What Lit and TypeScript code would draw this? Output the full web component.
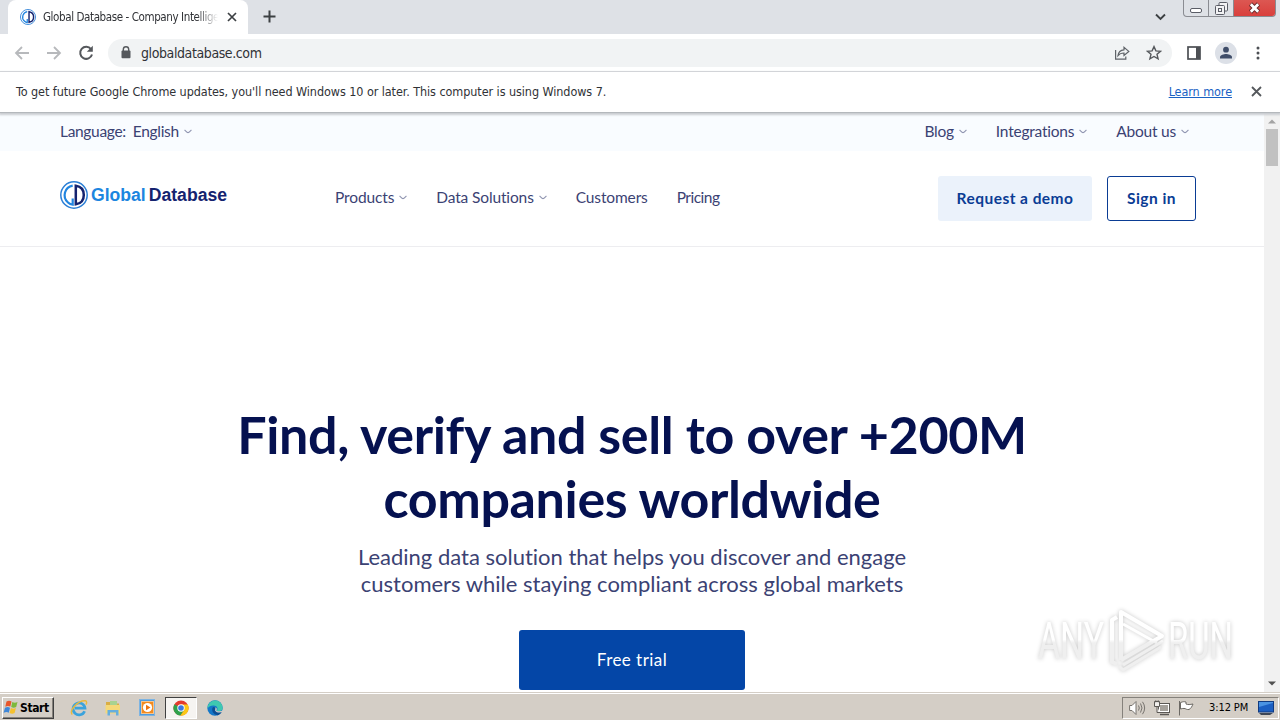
import { LitElement, css, html, svg } from "lit";
import { customElement, property } from "lit/decorators.js";

const caret = html`
  <svg class="caret" width="8" height="5" viewBox="0 0 8 5">
    <path d="M.6.8C2 2.2 3 3.6 4 3.6S6 2.2 7.4.8" fill="none" stroke="#8f94b0" stroke-width="1.1" />
  </svg>`;

// the G and D letters inside the ring
const emblem = svg`
  <circle cx="14" cy="14" r="13.2" fill="none" stroke="#2b7fd6" stroke-width="1.5" />
  <path d="M12.7 4.6A9.7 9.7 0 0 0 8 21.5Q10 23.5 12.7 23.7V17.5" fill="none" stroke="#2185e0" stroke-width="2.2" />
  <path d="M15.8 4.7V23.3C21.5 22.5 23.8 18.5 23.8 14S21.5 5.5 15.8 4.7Z" fill="none" stroke="#14236f" stroke-width="2.5" />
`;

@customElement("browser-chrome")
export class BrowserChrome extends LitElement {
  @property({ type: String })
  url = "";

  static get styles() {
    return css`
      :host {
        display: block;
        font-family: "DejaVu Sans Condensed", "DejaVu Sans", sans-serif;
        color: #303236;
        position: relative;
        z-index: 2;
      }
      svg {
        display: block;
        flex: none;
      }
      .tabs {
        display: flex;
        height: 34px;
        background: #dee1e6;
      }
      .tab {
        box-sizing: border-box;
        display: flex;
        align-items: center;
        width: 240px;
        margin-left: 8px;
        padding: 0 11px 0 12px;
        background: #fff;
        border-radius: 8px 8px 0 0;
      }
      .title {
        width: 175px;
        margin: 0 9px 0 7px;
        white-space: nowrap;
        font-size: 11.5px;
        letter-spacing: -0.4px;
        -webkit-mask-image: linear-gradient(90deg, #000 88%, transparent);
      }
      .plus {
        margin: 10px 0 0 15px;
      }
      .spacer {
        flex: 1;
      }
      .down {
        margin: 13px 17px 0 0;
      }
      .window {
        display: flex;
        height: 17px;
        margin-right: 4px;
        box-sizing: border-box;
        border: 1px solid #8a8c92;
        border-top: 0;
        border-radius: 0 0 4px 4px;
        overflow: hidden;
      }
      .window span {
        display: flex;
        justify-content: center;
        align-items: center;
        width: 24px;
        border-right: 1px solid #8a8c92;
      }
      .window .minimize {
        padding-top: 4px;
      }
      .window .close {
        width: 41px;
        border: 0;
        background: linear-gradient(#dc5752, #d93f3c);
      }
      .toolbar {
        box-sizing: border-box;
        display: flex;
        align-items: center;
        height: 38px;
        padding: 0 20px 0 14px;
        background: #fff;
        border-bottom: 1px solid #d6d8dc;
      }
      .back {
        margin-right: 16px;
      }
      .forward {
        margin-right: 16px;
      }
      .omnibox {
        box-sizing: border-box;
        display: flex;
        align-items: center;
        flex: 1;
        height: 28px;
        margin: 0 15px 0 14px;
        padding: 0 10px 0 13px;
        border-radius: 14px;
        background: #f1f3f4;
      }
      .url {
        flex: 1;
        margin-left: 10px;
        font-size: 14px;
        letter-spacing: -0.4px;
      }
      .share {
        margin-right: 16px;
      }
      .avatar {
        margin: 0 19px 0 14px;
      }
      .infobar {
        box-sizing: border-box;
        display: flex;
        align-items: center;
        height: 41px;
        padding: 0 18px 2px 16px;
        font-size: 12.5px;
        letter-spacing: -0.07px;
        background: #fff;
        border-bottom: 1px solid #b4b8bc;
        box-shadow: 0 1px 2px 1px #c9ccd0;
      }
      .message {
        flex: 1;
      }
      .learn {
        margin-right: 19px;
        color: #1a62c4;
        text-decoration: underline;
      }
    `;
  }

  render() {
    return html`
      <div class="tabs">
        <div class="tab">
          <svg width="16" height="16" viewBox="0 0 28 28">${emblem}</svg>
          <span class="title">Global Database - Company Intellige</span>
          <svg width="10" height="10" viewBox="0 0 10 10">
            <path d="M1 1l8 8M9 1L1 9" stroke="#3c4043" stroke-width="1.7" />
          </svg>
        </div>
        <svg class="plus" width="13" height="13" viewBox="0 0 13 13">
          <path d="M6.5 .5v12M.5 6.5h12" stroke="#3c4043" stroke-width="2" />
        </svg>
        <span class="spacer"></span>
        <svg class="down" width="11" height="8" viewBox="0 0 11 8">
          <path d="M1 1.5l4.5 4.5L10 1.5" fill="none" stroke="#3c4043" stroke-width="1.9" />
        </svg>
        <div class="window">
          <span class="minimize">
            <svg width="13" height="5" viewBox="0 0 13 5">
              <rect x=".5" y=".5" width="11" height="4" rx="1.5" fill="#fff" stroke="#5a5d66" />
            </svg>
          </span>
          <span>
            <svg width="13" height="13" viewBox="0 0 13 13" fill="#f2f2f4" stroke="#5a5d66">
              <rect x="4" y=".5" width="8.5" height="8.5" rx="1" />
              <rect x=".5" y="3.5" width="9" height="9" rx="1" />
              <rect x="3.5" y="6.5" width="3" height="3" />
            </svg>
          </span>
          <span class="close">
            <svg width="13" height="12" viewBox="0 0 13 12">
              <path d="M2.5 2l8 8M10.5 2l-8 8" stroke="#6b2a2c" stroke-width="4.6" />
              <path d="M2.8 2.2l7.4 7.6M10.2 2.200L2.800 9.800" stroke="#fff" stroke-width="2.8" />
            </svg>
          </span>
        </div>
      </div>

      <div class="toolbar">
        <svg class="back" width="16" height="14" viewBox="0 0 16 14" fill="none" stroke="#b7b9bc" stroke-width="1.8">
          <path d="M15 7H2M8 1L2 7l6 6" />
        </svg>
        <svg class="forward" width="16" height="14" viewBox="0 0 16 14" fill="none" stroke="#b7b9bc" stroke-width="1.8">
          <path d="M1 7h13M8 1l6 6-6 6" />
        </svg>
        <svg width="16" height="16" viewBox="0 0 16 16">
          <path d="M13 4.2A6 6 0 1 0 14 9.5" fill="none" stroke="#55585c" stroke-width="2" />
          <path d="M14.8 .8v6H8.8z" fill="#55585c" />
        </svg>
        <div class="omnibox">
          <svg width="10" height="13" viewBox="0 0 10 13">
            <path d="M2.3 5V3.5a2.7 2.7 0 0 1 5.4 0V5" fill="none" stroke="#55585c" stroke-width="1.4" />
            <rect x=".5" y="4.6" width="9" height="7.6" rx="1" fill="#55585c" />
          </svg>
          <span class="url">${this.url}</span>
          <svg class="share" width="16" height="16" viewBox="0 0 16 16" fill="none" stroke="#5f6368" stroke-width="1.2">
            <path d="M1.6 5v9.2h10.2v-2.6" />
            <path d="M4 10.6c.4-3.6 2.6-5.6 6-5.8V2.2l4.8 4.2L10 10.4V8c-2.6 0-4.5.7-6 2.6z" />
          </svg>
          <svg width="16" height="16" viewBox="0 0 16 16">
            <path d="M8 1.6l1.9 4.3 4.6.4-3.5 3 1.1 4.6L8 11.5l-4.1 2.4L5 9.3l-3.5-3 4.6-.4z" fill="none" stroke="#55585c" stroke-width="1.4" />
          </svg>
        </div>
        <svg width="14" height="14" viewBox="0 0 14 14">
          <rect x="1" y="1" width="12" height="12" fill="none" stroke="#4c4f54" stroke-width="1.7" />
          <path d="M9 1h4v12H9z" fill="#4c4f54" />
        </svg>
        <svg class="avatar" width="22" height="22" viewBox="0 0 22 22">
          <circle cx="11" cy="11" r="11" fill="#dce0e7" />
          <circle cx="11" cy="7.7" r="2.9" fill="#3f4d69" />
          <path d="M5 16.5v-1.3c0-2.4 4-3.2 6-3.2s6 .8 6 3.2v1.3z" fill="#3f4d69" />
        </svg>
        <svg width="4" height="14" viewBox="0 0 4 14" fill="#4c4f54">
          <circle cx="2" cy="2" r="1.5" />
          <circle cx="2" cy="7" r="1.5" />
          <circle cx="2" cy="12" r="1.5" />
        </svg>
      </div>

      <div class="infobar">
        <span class="message">To get future Google Chrome updates, you'll need Windows 10 or later. This computer is using Windows 7.</span>
        <span class="learn">Learn more</span>
        <svg width="11" height="11" viewBox="0 0 11 11">
          <path d="M1 1l9 9M10 1l-9 9" stroke="#55585c" stroke-width="1.8" />
        </svg>
      </div>
    `;
  }
}

@customElement("site-page")
export class SitePage extends LitElement {
  static get styles() {
    return css`
      :host {
        display: block;
        flex: 1;
        min-width: 0;
        background: #fff;
        color: #3b4273;
        font-family: Lato, sans-serif;
        font-size: 15.5px;
        font-variant-ligatures: none;
      }
      svg {
        display: block;
        flex: none;
      }
      .top {
        box-sizing: border-box;
        display: flex;
        align-items: center;
        justify-content: space-between;
        height: 38px;
        padding: 0 75px 2px 60px;
        background: #f9fcff;
      }
      .menu {
        display: flex;
        gap: 29px;
        white-space: nowrap;
      }
      .item {
        display: flex;
        align-items: center;
        letter-spacing: -0.22px;
      }
      .language {
        letter-spacing: -0.32px;
      }
      .caret {
        margin-left: 5px;
      }
      .label {
        margin-right: 7px;
      }
      header {
        box-sizing: border-box;
        display: flex;
        align-items: center;
        height: 96px;
        padding: 0 68px 0 60px;
        border-bottom: 1px solid #ededf0;
      }
      .logo {
        display: flex;
        align-items: center;
        width: 275px;
        padding-bottom: 7px;
        font: bold 17.6px "Liberation Sans", sans-serif;
        color: #14236f;
      }
      .logo span {
        margin-left: 3px;
      }
      .logo .blue {
        color: #1c86e0;
      }
      .nav {
        flex: 1;
        padding-bottom: 3px;
      }
      .nav .item {
        letter-spacing: -0.13px;
      }
      .nav .item:last-child {
        letter-spacing: -0.5px;
      }
      .button {
        box-sizing: border-box;
        display: flex;
        align-items: center;
        justify-content: center;
        height: 45px;
        padding-bottom: 2px;
        border-radius: 3px;
        font-weight: bold;
        color: #0a3c94;
        letter-spacing: 0.45px;
      }
      .demo {
        width: 154px;
        margin-right: 15px;
        background: #ebf2fb;
      }
      .signin {
        width: 89px;
        border: 1px solid #0a3c94;
      }
      .hero {
        display: flex;
        flex-direction: column;
        align-items: center;
        padding-top: 155px;
        text-align: center;
      }
      h1 {
        margin: 0 0 13px;
        font-size: 52px;
        line-height: 64px;
        font-weight: bold;
        color: #051150;
        letter-spacing: -0.36px;
        white-space: nowrap;
      }
      p {
        margin: 0;
        font-size: 22px;
        line-height: 27px;
        white-space: nowrap;
      }
      .trial {
        width: 226px;
        height: 60px;
        margin-top: 33px;
        background: #0446a7;
        color: #fff;
        font-size: 17px;
        font-weight: normal;
      }
    `;
  }

  item(label: string, hasMenu = true) {
    return html`<div class="item"><span>${label}</span>${hasMenu ? caret : ""}</div>`;
  }

  render() {
    return html`
      <div class="top">
        <div class="item language"><span class="label">Language:</span><span>English</span>${caret}</div>
        <div class="menu">
          ${this.item("Blog")} ${this.item("Integrations")} ${this.item("About us")}
        </div>
      </div>
      <header>
        <div class="logo">
          <svg width="28" height="28" viewBox="0 0 28 28">${emblem}</svg>
          <span class="blue">Global</span><span>Database</span>
        </div>
        <div class="menu nav">
          ${this.item("Products")} ${this.item("Data Solutions")}
          ${this.item("Customers", false)} ${this.item("Pricing", false)}
        </div>
        <div class="button demo">Request a demo</div>
        <div class="button signin">Sign in</div>
      </header>
      <div class="hero">
        <h1>
          Find, verify and sell to over +200M<br />
          companies worldwide
        </h1>
        <p>
          Leading data solution that helps you discover and engage<br />
          customers while staying compliant across global markets
        </p>
        <div class="button trial">Free trial</div>
      </div>
    `;
  }
}

@customElement("task-bar")
export class TaskBar extends LitElement {
  @property({ type: String })
  time = "";

  static get styles() {
    return css`
      :host {
        box-sizing: border-box;
        display: flex;
        align-items: center;
        height: 28px;
        padding: 2px 1px 0 2px;
        background: #d4cec6;
        border-top: 1px solid #d4cec6;
        box-shadow: inset 0 1px #fff;
        font-family: "DejaVu Sans Condensed", "DejaVu Sans", sans-serif;
        font-size: 11px;
        color: #000;
      }
      svg {
        display: block;
        flex: none;
      }
      .start {
        box-sizing: border-box;
        display: flex;
        align-items: center;
        width: 52px;
        height: 22px;
        border: 1px solid;
        border-color: #fff #404040 #404040 #fff;
        box-shadow: inset -1px -1px #85817b;
        font-weight: bold;
        font-size: 12px;
        letter-spacing: -0.4px;
      }
      .quick {
        display: flex;
        align-items: center;
        flex: 1;
        margin-left: 9px;
      }
      .app {
        box-sizing: border-box;
        display: flex;
        align-items: center;
        justify-content: center;
        width: 32px;
        height: 22px;
        margin-right: 2px;
      }
      .active {
        background: #f6f4f1;
        border: 1px solid;
        border-color: #404040 #fff #fff #404040;
      }
      .tray {
        box-sizing: border-box;
        display: flex;
        align-items: center;
        width: 157px;
        height: 22px;
        padding-left: 6px;
        border: 1px solid;
        border-color: #85817b #fff #fff #85817b;
      }
      .tray svg {
        margin-right: 8px;
      }
      .clock {
        width: 43px;
        margin: 0 10px 0 7px;
        white-space: nowrap;
        letter-spacing: -0.1px;
      }
    `;
  }

  render() {
    return html`
      <div class="start">
        <svg width="17" height="17" viewBox="0 0 17 17">
          <path d="M3.5 2.5c2-1.2 3.5-.9 5 0L7.3 7.6c-1.5-.8-3-.9-5 .1z" fill="#e8562a" />
          <path d="M9.3 3c1.7.9 3.3.9 5.2 0l-1.3 5c-1.9 1-3.4.8-5 0z" fill="#7db93c" />
          <path d="M2 8.7c2-1 3.5-.9 5 0l-1.2 5c-1.5-.9-3.1-.9-5.2.1z" fill="#3f87d8" />
          <path d="M7.9 9.1c1.6.8 3.2.9 5 0l-1.3 5c-1.8 1-3.4.8-5 0z" fill="#f5c12e" />
        </svg>
        <span>Start</span>
      </div>
      <div class="quick">
        <span class="app">
          <svg width="18" height="18" viewBox="0 0 18 18" fill="none">
            <path d="M14.6 12.2A6 6 0 1 1 15 9.2H5" stroke="#3ba3dc" stroke-width="2.7" />
            <path d="M2.3 15.5C-1 12 7 1.5 15.3 1.8c2 .5 1.4 2.5.6 3.8" stroke="#e9b93d" stroke-width="1.4" />
          </svg>
        </span>
        <span class="app">
          <svg width="18" height="18" viewBox="0 0 18 18">
            <path d="M2 3h5l1 1.5h7V14H2z" fill="#d9ae45" />
            <path d="M6 2h7v5H6z" fill="#a8d290" />
            <path d="M1.5 6h14.5v8.5h-14.5z" fill="#f5d878" />
            <path d="M3.5 16.5v-5.5h11v5.5h-2.5v-3H6v3z" fill="#64aede" />
          </svg>
        </span>
        <span class="app">
          <svg width="17" height="17" viewBox="0 0 17 17">
            <rect x=".5" y=".5" width="15" height="16" fill="#4f9bdc" stroke="#7db4e2" />
            <rect x="2.5" y="2.5" width="12" height="12" fill="#f28a1e" stroke="#f6c48c" />
            <circle cx="8.5" cy="8.5" r="4.6" fill="#fff" />
            <path d="M7 5.7l4.500 2.800L7 11.300z" fill="#ec7410" />
          </svg>
        </span>
        <span class="app active">
          <svg width="16" height="16" viewBox="0 0 16 16">
            <circle cx="8" cy="8" r="7.6" fill="#e33b2e" />
            <path d="M8 8L1.4 4.2A7.6 7.6 0 0 0 7.4 15.6L11.3 9.9z" fill="#2fa24c" />
            <path d="M8 4.5h6.8A7.6 7.6 0 0 1 7.4 15.6L11.3 9.9z" fill="#fbc816" />
            <circle cx="8" cy="8" r="3.7" fill="#fff" />
            <circle cx="8" cy="8" r="2.8" fill="#3b78e0" />
          </svg>
        </span>
        <span class="app">
          <svg width="16" height="16" viewBox="0 0 16 16">
            <circle cx="8" cy="8" r="7.7" fill="#1477c8" />
            <path d="M.8 6A7.6 7.6 0 0 1 15.7 8c0 3-3.5 3.7-6 2.7 1.6-1.6.7-4.7-2-5C4.5 5.2 2 6.3.4 8.5z" fill="#3fc8b0" />
            <path d="M6 7c-2.3 3.6.5 7.5 4.6 8.2 2-.7 3.5-2.2 4.3-3.8-3.4 1.5-6 .6-6.8-1.3 1.4-.8 1.3-3-2.1-3.1z" fill="#0c4e94" />
            <path d="M8.5 7.2c1.6 1 1.5 2.2.8 3.2 1.8 1.2 4.3 1.2 6.7-.2v1.6c-3 1.4-6.5.9-7.9-1.4z" fill="#d4cec6" />
          </svg>
        </span>
      </div>
      <div class="tray">
        <svg width="17" height="16" viewBox="0 0 17 16" stroke="#77736e" fill="none">
          <path d="M.6 5.5h2.4l4-4v13l-4-4H.6z" fill="#fff" />
          <path d="M9.5 5.5q1.6 2.5 0 5M11.5 3.5q3 4.5 0 9M13.5 1.8q4.3 6.2 0 12.4" />
        </svg>
        <svg width="16" height="16" viewBox="0 0 16 16" stroke="#5c5955">
          <rect x="4.5" y="3.5" width="11" height="9" fill="#fff" />
          <rect x="6.5" y="5.5" width="7" height="5" fill="#a5a19b" stroke="#a5a19b" />
          <path d="M6 14.5h9" stroke-width="1.5" />
          <path d="M.5 1.5h5v5h-5zM3 6.5v6h3" fill="#f1efec" />
          <path d="M1.8.3v2M4.2.3v2" />
        </svg>
        <svg width="16" height="16" viewBox="0 0 16 16" stroke="#6c6964" fill="#fff">
          <path d="M1.5 1v14.5" />
          <path d="M2.5 2.5c3-1 3.5-1 5.5-.5v2c2 1 4 .5 7 0-1 2.5-2 4.5-4 5.5-2 .3-3-.5-4-1-1.5-.3-3 0-4.5.5z" />
        </svg>
        <span class="clock">${this.time}</span>
        <svg width="16" height="16" viewBox="0 0 16 16">
          <rect x=".5" y="1.5" width="15" height="10.5" fill="#1c5fc2" stroke="#103a80" />
          <path d="M1 7L15 3v-1H1z" fill="#4b93e2" />
          <path d="M1 13h14l-3 2H3z" fill="#3e4756" />
        </svg>
      </div>
    `;
  }
}

@customElement("app-root")
export class AppRoot extends LitElement {
  static get styles() {
    return css`
      :host {
        display: flex;
        flex-direction: column;
        position: relative;
        width: 1280px;
        height: 720px;
        overflow: hidden;
        background: #fff;
      }
      .view {
        display: flex;
        flex: 1;
        min-height: 0;
        overflow: hidden;
      }
      .scrollbar {
        box-sizing: border-box;
        display: flex;
        flex-direction: column;
        align-items: center;
        width: 16px;
        padding: 6px 0 6px;
        background: #f1f1f1;
      }
      .thumb {
        width: 12px;
        height: 37px;
        margin: 5px 0 auto;
        background: #c1c1c1;
      }
      .watermark {
        position: absolute;
        left: 1030px;
        top: 600px;
        overflow: visible;
        filter: drop-shadow(0 0 2px rgba(0, 0, 0, 0.22));
      }
    `;
  }

  render() {
    return html`
      <browser-chrome url="globaldatabase.com"></browser-chrome>
      <div class="view">
        <site-page></site-page>
        <div class="scrollbar">
          <svg width="8" height="5" viewBox="0 0 8 5"><path d="M0 4.5L4 .5l4 4z" fill="#a3a3a3" /></svg>
          <div class="thumb"></div>
          <svg width="8" height="5" viewBox="0 0 8 5"><path d="M0 .5l4 4 4-4z" fill="#505050" /></svg>
        </div>
      </div>
      <svg class="watermark" width="240" height="84" viewBox="0 0 240 84">
        <defs>
          <linearGradient id="fade" x1="0" y1="0" x2="0" y2="84" gradientUnits="userSpaceOnUse">
            <stop offset=".47" stop-color="#fff" />
            <stop offset=".51" stop-color="#efefef" />
          </linearGradient>
        </defs>
        <g font-family="Roboto, sans-serif" font-size="51" fill="url(#fade)">
          <text x="8" y="59" textLength="66" lengthAdjust="spacingAndGlyphs">ANY</text>
          <text x="138" y="59" textLength="65" lengthAdjust="spacingAndGlyphs">RUN</text>
        </g>
        <g fill="none" stroke="url(#fade)" stroke-width="4" stroke-linejoin="round">
          <path d="M91 60V12L132 36 91 60" />
          <path d="M93 24l34 19" stroke-width="3" />
          <path d="M87 17l-5 3v42l5 2" />
          <path d="M133 41L93 65M131 47L93 70l-4-4" stroke-width="3" />
        </g>
      </svg>
      <task-bar time="3:12 PM"></task-bar>
    `;
  }
}
